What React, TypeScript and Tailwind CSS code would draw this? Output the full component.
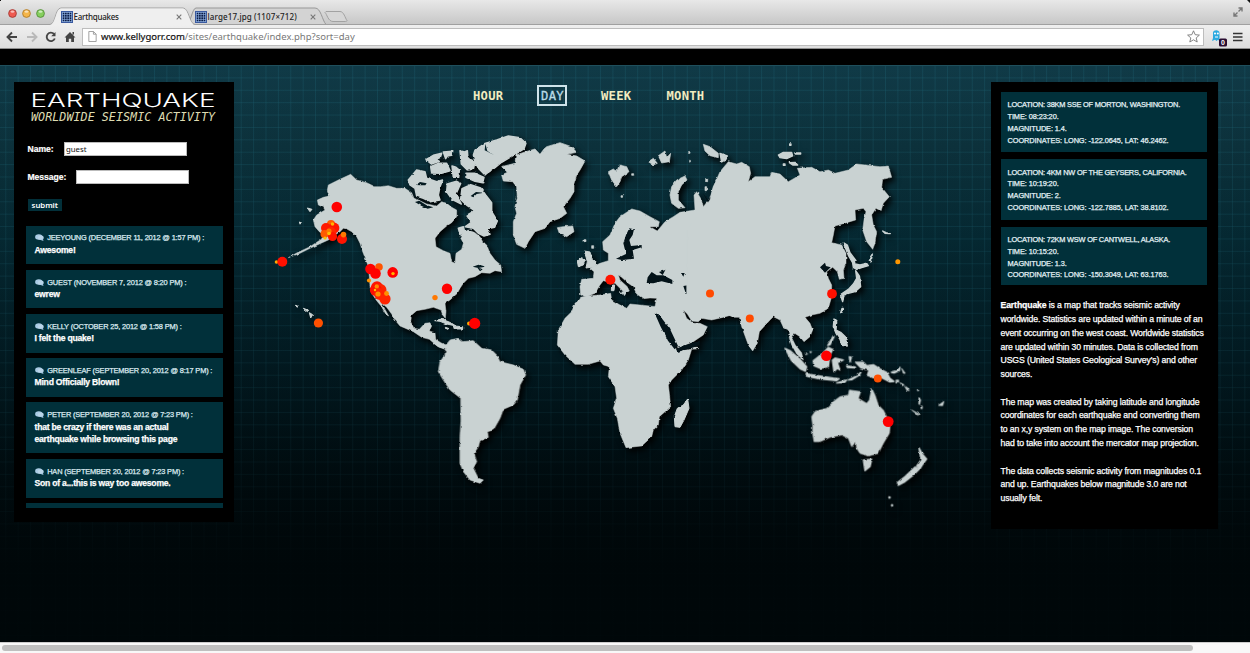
import React from "react";

const comments = [
  { who: "JEEYOUNG (DECEMBER 11, 2012 @ 1:57 PM) :", text: "Awesome!" },
  { who: "GUEST (NOVEMBER 7, 2012 @ 8:20 PM) :", text: "ewrew" },
  { who: "KELLY (OCTOBER 25, 2012 @ 1:58 PM) :", text: "I felt the quake!" },
  { who: "GREENLEAF (SEPTEMBER 20, 2012 @ 8:17 PM) :", text: "Mind Officially Blown!" },
  { who: "PETER (SEPTEMBER 20, 2012 @ 7:23 PM) :", text: "that be crazy if there was an actual earthquake while browsing this page" },
  { who: "HAN (SEPTEMBER 20, 2012 @ 7:23 PM) :", text: "Son of a...this is way too awesome." },
];

const reports = [
  ["38KM SSE OF MORTON, WASHINGTON.", "08:23:20.", "1.4.", "LONG: -122.0645, LAT: 46.2462."],
  ["4KM NW OF THE GEYSERS, CALIFORNIA.", "10:19:20.", "2.", "LONG: -122.7885, LAT: 38.8102."],
  ["72KM WSW OF CANTWELL, ALASKA.", "10:15:20.", "1.3.", "LONG: -150.3049, LAT: 63.1763."],
];

// x, y, radius, colour
const quakes: [number, number, number, string][] = [
  [336.8, 207, 5.3, "#ff0000"],
  [276.5, 262, 1.8, "#ffa800"], [282.3, 261.8, 5, "#ff1000"],
  [331, 224, 4, "#ff5a00"], [326, 228, 5, "#ff1800"], [334, 228, 5.4, "#ff1400"], [331, 232, 5, "#ff2800"],
  [324.5, 234, 4, "#ff5a00"], [332.5, 236.5, 4.6, "#ff1400"], [329, 231, 2.6, "#ff7a00"], [332.5, 224, 1.8, "#ffb400"],
  [329, 233.5, 1.8, "#ffc000"], [325, 238, 1.6, "#ffc000"],
  [342, 239, 5, "#ff1400"], [343.5, 234.6, 2.8, "#ff7800"],
  [370.5, 269, 5.3, "#ff0000"], [379, 267, 3.8, "#ff5400"], [375.5, 273.5, 5.3, "#ff0000"],
  [392.7, 272.4, 5.3, "#ff0000"], [393, 273.6, 1.7, "#ffb400"], [369, 280.5, 2.1, "#ff9000"],
  [377, 287, 5.8, "#ff1400"], [380.5, 290, 6, "#ff2400"], [375.8, 290, 6, "#ff1000"], [380, 294, 6, "#ff2000"],
  [385, 299, 5.6, "#ff2400"], [376.8, 286.4, 2.2, "#ff8a00"], [378, 294, 2.6, "#ff9000"], [386.5, 293.5, 2.4, "#ff9000"], [375, 290, 1.2, "#ffc000"],
  [447, 288.7, 5.2, "#ff0000"], [435, 297.6, 2.7, "#ff7800"],
  [318.4, 323, 4.6, "#ff5000"],
  [469, 323.4, 2, "#ffa800"], [474.7, 323.4, 5.6, "#ff0000"],
  [610.4, 279.8, 5, "#ff1400"], [710, 293.4, 4, "#ff4a00"], [749.8, 318.4, 4, "#ff4a00"],
  [832, 293.8, 4.9, "#ff1000"], [897.8, 261.8, 2.5, "#ff9600"],
  [826.4, 355.8, 5.3, "#ff0000"], [877.8, 378.5, 4, "#ff5000"], [888.2, 421.6, 5.4, "#ff0000"],
];

function WorldMap() {
  return (
    <svg width="710" height="400" viewBox="260 120 710 400" className="block">
      <defs>
        <filter id="coast" x="250" y="110" width="730" height="420" filterUnits="userSpaceOnUse" colorInterpolationFilters="sRGB">
          <feTurbulence type="fractalNoise" baseFrequency="0.22" numOctaves="2" seed="4" result="n" />
          <feDisplacementMap in="SourceGraphic" in2="n" scale="2.4" xChannelSelector="R" yChannelSelector="G" result="d" />
          <feDropShadow in="d" dx="3" dy="3.5" stdDeviation="3" floodColor="#000" floodOpacity="1" />
        </filter>
      </defs>
      <g filter="url(#coast)" fill="#c9d2d2" stroke="#c9d2d2" strokeLinejoin="round">
        {/* North America */}
        <g transform="translate(260 120) scale(.33333)" strokeWidth="1.500">
          <path d="M205 195L235 180L272 163L290 180L320 188L345 200L362 200L385 197L410 205L435 205L455 218L462 235L475 240L500 252L530 258L545 245L560 250L575 262L590 270L590 290L575 308L560 318L540 335L525 355L528 380L550 392L570 400L575 425L585 430L588 400L605 388L610 370L600 350L610 335L625 330L645 338L660 350L668 365L680 375L690 400L705 420L722 435L725 455L705 452L690 460L665 458L645 470L625 475L610 490L600 505L592 520L570 540L555 550L558 575L556 595L548 585L543 570L520 562L495 568L470 572L455 585L452 605L462 625L478 628L495 610L510 608L515 618L508 633L525 638L528 665L545 672L560 690L534 680L508 658L485 652L460 635L420 618L405 600L395 582L380 562L364 548L376 570L386 588L378 584L365 560L350 542L335 520L330 500L328 470L325 440L318 420L308 395L300 370L290 350L275 335L262 328L250 325L240 335L225 345L205 360L180 371L150 385L120 400L85 413L110 399L150 380L185 357L190 345L178 335L165 320L160 300L170 285L195 270L190 262L175 255L172 240L190 232L208 228L202 210Z" />
          <g strokeWidth="4.500">
            <path d="M445 180L470 150L495 155L500 175L530 185L548 180L540 200L535 225L540 240L510 245L490 235L470 228L465 205L450 195ZM498 119L520 106L545 100L541 112L528 118L538 124L514 132ZM550 96L578 94L575 106L562 108L557 116ZM512 140L535 130L560 130L570 152L545 160L515 159ZM600 92L614 96L622 92L624 115L645 125L640 148L622 150L604 132ZM576 138L588 142L598 150L596 172L580 172ZM562 192L590 184L602 190L596 204L588 222L604 252L576 238L560 215Z" />
            <path d="M606 206L624 198L632 194L662 204L677 225L695 248L695 275L712 303L704 322L682 326L690 343L672 348L655 340L640 325L616 320L634 307L620 286L644 272L622 257L602 238ZM595 325L610 320L614 335L600 343Z" />
            <path d="M618 160L645 160L672 172L668 188L645 184L618 172Z" />
          </g>
          <path d="M142 264L156 268L150 275ZM118 306L125 309L120 312ZM106 556L116 558L112 562ZM130 565L146 571L142 575ZM148 578L158 584L152 594ZM524 602L545 597L572 608L588 618L560 612L540 604ZM580 618L608 620L608 627L583 627ZM556 622L565 625L558 628Z" strokeWidth="3" />
          <g fill="#041a20" stroke="none">
            <path d="M638 440L655 434L675 440L655 444ZM650 440L668 448L660 454ZM468 195L480 186L500 190L496 196L482 196ZM465 246L478 242L500 256L520 262L503 266L485 258ZM632 228L648 216L672 218L650 222L640 232Z" />
          </g>
        </g>
        {/* Greenland and the northern islands */}
        <g transform="translate(420 75) scale(.33333)" strokeWidth="2">
          <path d="M165 225L195 205L230 195L265 183L300 188L318 205L312 222L290 235L265 250L245 262L225 278L205 292L195 300L175 280L165 260L160 240Z" strokeWidth="4" />
          <path d="M245 275L285 265L288 240L318 230L345 222L360 238L372 222L380 215L420 203L455 215L470 232L440 238L470 243L495 258L480 285L470 300L462 325L462 350L450 370L430 395L440 415L420 430L390 440L375 460L345 470L325 500L315 520L290 508L280 480L280 440L290 415L285 395L292 370L290 335L278 320L250 318L245 300L262 292Z" />
          <path d="M412 458L430 455L458 453L462 470L440 485L418 475ZM565 290L580 282L590 290L598 270L620 275L627 290L605 305L600 320L590 335L575 315ZM685 260L700 250L712 265L700 270ZM715 242L735 228L740 248L752 235L748 260L725 264ZM850 208L870 215L895 235L895 248L870 242L855 228Z" />
          <path d="M755 335L770 315L795 303L801 315L785 330L775 350L775 375L795 398L775 400L755 385L750 360Z" />
          <path d="M805 230h5v5h-5zM806 256h5v5h-5zM857 310h6v10h-6zM855 335h5v12h-5zM635 296h6v5h-6zM603 362h5v5h-5zM492 494h6v6h-6zM515 512h6v8h-6z" />
          <path d="M196 206L202 228L222 240L206 232L194 226Z" fill="#06222a" stroke="none" />
        </g>
        {/* Europe, Middle East and Africa */}
        <g transform="translate(540 190) scale(.33333)" strokeWidth="1.500">
          <path d="M188 155L210 135L225 100L240 80L275 57L300 63L330 80L358 95L355 110L330 110L352 123L375 95L400 80L420 67L465 60L462 15L470 5L485 30L490 50L510 25L520 -10L540 -45L700 0L640 360L598 380L575 375L545 383L515 390L485 385L475 395L455 393L442 372L430 360L440 385L460 400L480 400L502 410L490 435L460 455L415 475L405 460L390 430L370 400L350 372L345 350L350 325L330 324L310 326L290 312L280 290L265 280L245 262L235 255L240 270L262 290L268 303L255 310L240 295L225 280L205 276L190 272L180 285L165 310L140 320L122 315L120 290L125 268L160 265L162 245L150 235L180 220L205 212L205 190L190 180Z" />
          <path d="M122 322L140 318L180 315L212 310L215 330L240 345L260 355L270 342L300 345L350 350L350 375L370 410L390 440L405 470L412 482L455 478L445 510L425 540L395 570L385 585L388 610L392 650L358 680L355 705L340 720L335 740L305 768L258 773L240 730L232 685L220 655L230 625L225 590L205 560L208 530L190 525L180 513L145 523L105 523L75 495L52 465L55 420L75 385L95 365L105 340L120 328Z" />
          <path d="M443 627L447 655L432 690L420 712L405 710L403 680L412 655L430 645ZM133 183L150 186L155 205L170 217L165 230L138 234L142 215ZM112 214L125 203L136 210L130 225L115 230ZM215 285L224 285L222 302L214 302ZM238 306L258 306L254 316ZM455 472L475 472L475 476L455 477Z" strokeWidth="3" />
          <g fill="#031319" stroke="none">
            <path d="M268 115L282 118L278 135L268 150L273 168L305 165L305 172L278 180L282 206L245 210L228 206L258 192L250 160L258 135Z" />
            <path d="M320 279L323 262L335 246L350 256L370 256L397 270L397 282L365 274L340 280ZM357 246L376 240L368 255ZM430 288L448 285L460 305L438 312ZM423 249L434 249L430 260Z" />
            <path d="M344 370L360 378L390 417L414 468L404 478L384 452L362 410ZM408 476L440 464L480 452L478 466L455 474L412 486Z" />
            <path d="M488 8L505 40L500 85L513 88L505 55L517 15L505 30Z" />
          </g>
        </g>
        {/* Asia */}
        <g transform="translate(720 130) scale(.33333)" strokeWidth="1.500">
          <path d="M0 125L25 95L50 102L65 97L88 110L92 130L85 155L105 140L150 140L155 127L180 132L205 155L240 135L232 115L275 112L300 125L325 120L345 130L385 120L410 102L480 110L505 108L515 142L488 148L485 172L508 200L490 220L483 243L468 235L455 255L460 285L470 305L465 340L458 358L440 335L428 300L432 270L438 245L430 235L405 240L407 270L380 278L345 288L340 315L335 338L365 345L378 370L378 400L370 420L372 445L358 448L352 425L338 412L320 425L325 445L335 465L335 500L325 535L300 550L275 555L255 562L270 580L278 600L270 620L252 635L240 620L224 610L216 625L226 645L245 668L250 690L230 672L215 645L208 625L205 600L190 592L180 570L160 560L150 570L118 605L112 640L98 663L85 645L65 590L58 562L40 562L25 555L0 562L-100 500L-100 300L-30 210L-20 170Z" />
          <g strokeWidth="4">
            <path d="M175 75L190 67L215 67L218 78L200 86L180 83ZM224 69L242 69L242 72L226 72ZM208 98L225 97L233 105L218 105ZM0 70L22 78L18 88L5 96ZM190 102h5v4h-5zM209 42h4v4h-4z" />
            <path d="M370 338L382 345L390 368L408 392L400 402L386 378ZM398 400L420 405L440 400L445 407L425 413L410 418L400 412ZM407 422L418 438L422 470L405 485L385 490L370 496L364 492L385 478L400 462L410 445ZM362 497L372 500L368 515ZM488 303L498 308L508 311L495 310ZM452 380L457 372L455 385ZM448 395L452 388L452 397ZM366 535L370 535L362 548Z" />
            <path d="M342 567L350 575L348 600L362 607L376 620L382 648L366 646L360 628L348 610L340 590Z" />
          </g>
          <path d="M300 412L315 398L318 408L332 412L315 428Z" fill="#031319" stroke="none" />
        </g>
        {/* South America */}
        <g transform="translate(400 320) scale(.33333)" strokeWidth="2">
          <path d="M105 58L125 70L138 75L150 60L175 55L188 65L220 62L245 85L275 90L290 105L300 125L340 135L370 148L377 165L360 195L352 240L340 255L310 268L300 295L280 330L262 335L265 352L240 362L235 380L222 400L230 425L220 445L235 475L250 480L240 490L210 480L190 455L180 430L180 350L183 300L182 235L150 210L130 180L115 155L120 125L135 105L138 85L120 82L104 72Z" />
        </g>
        {/* Oceania */}
        <g transform="translate(720 300) scale(.33333)" strokeWidth="2">
          <path d="M275 350L285 335L320 325L340 305L360 290L385 285L388 270L422 275L415 295L440 310L448 300L455 265L465 285L475 315L490 330L500 350L510 380L508 400L490 430L475 460L445 468L420 460L410 445L408 425L395 440L385 415L365 405L330 412L300 425L282 425L278 400L278 375Z" />
          <g strokeWidth="4">
            <path d="M430 480L455 478L450 500L435 512ZM597 444L607 462L620 477L608 493L600 506L590 498L603 480ZM585 501L597 508L580 525L555 545L535 556L532 548L555 530Z" />
            <path d="M280 182L290 174L310 158L325 142L338 148L330 165L325 200L300 205L282 197ZM195 145L210 152L240 178L260 200L256 214L240 206L215 182ZM258 221L300 228L340 234L358 236L350 242L300 237L262 229ZM337 180L345 174L370 180L352 188L360 210L352 205L342 215ZM350 249L380 240L374 247ZM385 240L410 228L423 216L418 225L395 239Z" />
            <path d="M407 187L430 187L440 197L460 194L480 207L500 217L510 235L522 244L510 246L485 233L460 233L442 226L447 210L422 203ZM514 217L532 212L540 202L538 212L522 219ZM388 170L394 172L390 186ZM380 198L406 201L406 204L382 202ZM323 136L340 108L342 110L330 134Z" />
          </g>
          <path d="M545 205L556 220L550 220ZM528 240h8v6h-8zM540 248l12 6l-4 4zM554 258l10 6l4 8l-8-2zM592 268h4v4h-4zM597 292l5 8l-3 14l-3-2zM603 318h4v8h-4zM575 330L598 342L594 346ZM655 316L672 304L668 317ZM506 590h5v5h-5zM514 613h4v6h-4zM256 158l7 4l-6 2zM270 154l5 2l-4 3z" />
        </g>
      </g>
      {quakes.map(([x, y, r, c], i) => (
        <circle key={i} cx={x} cy={y} r={r} fill={c} />
      ))}
    </svg>
  );
}

function Favicon() {
  return (
    <svg width="12" height="12" viewBox="0 0 12 12" className="shrink-0">
      <rect x=".5" y=".5" width="11" height="11" fill="#8fb2e4" stroke="#3a5aa0" />
      {[1.7, 4, 6.3, 8.6].map((y) =>
        [1.7, 4, 6.3, 8.6].map((x) => <rect key={`${x}-${y}`} x={x} y={y} width="1.700" height="1.700" fill="#0b1c46" />)
      )}
    </svg>
  );
}

function Cross() {
  return (
    <svg width="6" height="6" viewBox="0 0 6 6" className="shrink-0">
      <path d="M.7 .7L5.300 5.300M5.300 .7L.7 5.300" stroke="#777" strokeWidth="1.100" />
    </svg>
  );
}

function Light({ tone, edge }: { tone: string; edge: string }) {
  return (
    <svg width="9" height="9" viewBox="0 0 9 9">
      <circle cx="4.500" cy="4.500" r="3.900" fill={tone} stroke={edge} strokeWidth=".8" />
      <ellipse cx="4.500" cy="2.600" rx="2" ry="1.200" fill="#fff" opacity=".6" />
    </svg>
  );
}

function Browser() {
  return (
    <header className="h-[49px] shrink-0 font-['Noto_Sans',sans-serif]">
      <div className="relative flex h-[25px] items-end bg-linear-to-b from-[#e8e8e8] to-[#c6c6c6]">
        <svg width="1250" height="25" viewBox="0 0 1250 25" className="absolute inset-0">
          <path d="M186 24.500C191 24 192 8 196 8H315C321 8 322 20 326 24.500Z" fill="#d3d3d3" stroke="#989898" />
          <path d="M326 11.500H340C344 11.500 345 18 347 20.500C347 21.500 346 21.500 344 21.500H333C328 21.500 327 14 325 12.500Z" fill="#d6d6d6" stroke="#a2a2a2" />
          <path d="M0 24.500H50C56 24 55 8 61 8H183C189 8 189 24 195 24.500H1250" fill="none" stroke="#a0a0a0" />
          <path d="M50 25C56 24 55.500 8.500 61 8.500H183C188.500 8.500 189 24 195 25Z" fill="#efefef" />
          <path d="M1238.500 8h3.500v3.500M1242 8l-3.500 3.500M1237.500 16h-3.500v-3.500M1234 16l3.500-3.500" fill="none" stroke="#777" strokeWidth="1.400" />
          <path d="M1247 0h3v3zM0 0h1v1H0z" fill="#111" />
        </svg>
        <div className="relative flex h-[17px] w-full items-center text-[8px] font-medium text-[#222]">
          <div className="-mt-[6px] flex gap-[5px] pl-[7.500px]">
            <Light tone="#ef5a50" edge="#9c332e" />
            <Light tone="#f5b548" edge="#a87524" />
            <Light tone="#86cf5e" edge="#4b8632" />
          </div>
          <div className="ml-[16px] flex w-[134px] items-center">
            <Favicon />
            <span className="w-[103px] pl-px tracking-[-0.250px]">Earthquakes</span>
            <Cross />
          </div>
          <Favicon />
          <span className="w-[103px] pl-px tracking-[0.120px]">large17.jpg (1107×712)</span>
          <Cross />
        </div>
      </div>
      <div className="flex h-[24px] items-center border-b border-[#8f8f8f] bg-linear-to-b from-[#efefef] to-[#dedede] pl-[6px]">
        <svg width="72" height="14" viewBox="0 0 72 14" fill="none" strokeWidth="1.900" className="shrink-0">
          <path d="M6 2.500L1.500 7L6 11.500M1.500 7H11" stroke="#444" />
          <path d="M26 2.500L30.500 7L26 11.500M30.500 7H21" stroke="#b9b9b9" />
          <path d="M48 4A4.200 4.200 0 1 0 48.800 8.500" stroke="#444" />
          <path d="M49.500 2V6.200H45.200Z" fill="#444" />
          <path d="M58.500 7.500L64 2L69.500 7.500H68V12H65.200V8.800H62.800V12H60V7.500ZM66.500 2h1.500v2.500h-1.500z" fill="#444" />
        </svg>
        <div className="ml-[4px] flex h-[18px] w-[1122px] items-center border border-[#bdbdbd] bg-white pl-[5px] text-[9.500px] text-[#777]">
          <svg width="9" height="11" viewBox="0 0 9 12" className="mr-[4px] shrink-0">
            <path d="M.5 .5H5.500L8.500 3.500V11.500H.5ZM5.500 .5V3.500H8.500" fill="#fff" stroke="#999" />
          </svg>
          <span className="pt-px tracking-[-0.040px] text-[#111] [-webkit-text-stroke:0.200px]">www.kellygorr.com</span>
          <span className="pt-px">/sites/earthquake/index.php?sort=day</span>
          <svg width="13" height="13" viewBox="0 0 13 13" className="mr-[3px] ml-auto shrink-0">
            <path d="M6.500 .8L8.200 4.700L12.400 5.100L9.200 7.900L10.200 12L6.500 9.800L2.800 12L3.800 7.900L.6 5.100L4.800 4.700Z" fill="#fff" stroke="#777" strokeWidth=".9" />
          </svg>
        </div>
        <svg width="16" height="18" viewBox="0 0 16 18" className="mt-[2px] ml-[7px] shrink-0">
          <path d="M2 3.500C2.500 .5 8.500 .5 8.500 4V12L7 10.800L5.500 12L4 10.800L1 12L2 9Z" fill="#2ba9e0" />
          <circle cx="4" cy="4.500" r="1" fill="#fff" /><circle cx="6.800" cy="4.500" r="1" fill="#fff" />
          <path d="M4 8h3" stroke="#fff" />
          <rect x="8" y="9.500" width="8" height="8" rx="1.500" fill="#2a0d31" />
          <text x="12" y="16" fill="#fff" fontSize="7" fontWeight="700" textAnchor="middle" fontFamily="Liberation Sans">0</text>
        </svg>
        <svg width="10" height="10" viewBox="0 0 10 10" className="ml-[6px] shrink-0">
          <path d="M0 1.500H9.500M0 5H9.500M0 8.500H9.500" stroke="#333" strokeWidth="1.700" />
        </svg>
      </div>
    </header>
  );
}

function Bubble() {
  return (
    <svg width="9" height="7" viewBox="0 0 9 7" className="mr-[3.700px] shrink-0">
      <ellipse cx="3.800" cy="3" rx="3.700" ry="2.700" fill="#a9cbe4" />
      <ellipse cx="5.800" cy="3.800" rx="2.900" ry="2.200" fill="#b9d4e8" />
      <path d="M7.500 4.500L8.600 6.900L5 5.800Z" fill="#a9cbe4" />
    </svg>
  );
}

function LeftPanel() {
  return (
    <aside className="h-[440px] w-[220px] shrink-0 overflow-hidden bg-black pl-[12px] text-white">
      <svg width="200" height="46" viewBox="26 82 200 46" className="block">
        <text x="30.500" y="106.500" fontSize="18" fontWeight="300" textLength="185" lengthAdjust="spacingAndGlyphs" fill="#fff" className="font-['Inter','DejaVu_Sans',sans-serif]">EARTHQUAKE</text>
        <text x="31" y="120.500" fontSize="11.700" fontStyle="italic" textLength="184" lengthAdjust="spacing" fill="#dedcb2" className="font-['DejaVu_Sans_Mono',monospace]">WORLDWIDE SEISMIC ACTIVITY</text>
      </svg>
      <form className="pl-[1.500px] text-[8.600px] leading-[14px] font-bold tracking-[-0.050px]">
        <div className="mt-[14px] flex h-[15px] items-center">
          <label className="w-[36.500px] [-webkit-text-stroke:0.200px]">Name:</label>
          <div className="h-[14px] w-[123px] border border-[#bbb] bg-white pl-px text-[7.800px] leading-[13px] font-normal tracking-normal text-[#111] font-['Noto_Sans',sans-serif]">guest</div>
        </div>
        <div className="mt-[13px] flex h-[15px] items-center">
          <label className="w-[48.500px] [-webkit-text-stroke:0.200px]">Message:</label>
          <div className="h-[14px] w-[113px] border border-[#bbb] bg-white" />
        </div>
        <button type="button" className="mt-[14px] block h-[12.500px] w-[34.500px] bg-[#02303a] text-center text-[7.800px] leading-[12px] font-semibold tracking-[-0.050px] font-['Noto_Sans',sans-serif]">submit</button>
      </form>
      <div className="mt-[14.500px] flex h-[282px] w-[196.500px] flex-col gap-[5.400px] overflow-hidden">
        {comments.map((c) => (
          <div key={c.who} className="shrink-0 bg-[#01303a] px-[8.500px] pt-[6.400px] pb-[8px]">
            <div className="flex h-[12px] items-center whitespace-nowrap text-[7.400px] tracking-[-0.150px] text-[#dbeaf0] [-webkit-text-stroke:0.250px]">
              <Bubble />
              {c.who}
            </div>
            <p className="text-[8.600px] leading-[12.400px] font-bold tracking-[-0.220px] [-webkit-text-stroke:0.250px]">{c.text}</p>
          </div>
        ))}
        <div className="h-[20px] shrink-0 bg-[#01303a]" />
      </div>
    </aside>
  );
}

function RightPanel() {
  return (
    <aside className="h-[447px] w-[227px] shrink-0 bg-black px-[10px] pt-[10.500px] text-white">
      <div className="flex flex-col gap-[7px]">
        {reports.map((r) => (
          <div key={r[0]} className="mr-[0.500px] h-[60.400px] bg-[#01303a] pt-[7.400px] pl-[7px] text-[7.400px] leading-[11.700px] tracking-[-0.100px] whitespace-nowrap text-[#e4f2f6] last:h-[58px] [-webkit-text-stroke:0.250px]">
            <div className="tracking-[-0.210px]">LOCATION: {r[0]}</div>
            <div>TIME: {r[1]}</div>
            <div>MAGNITUDE: {r[2]}</div>
            <div>COORDINATES: {r[3]}</div>
          </div>
        ))}
      </div>
      <div className="mt-[14.500px] flex flex-col gap-[13.800px] text-[8.700px] leading-[13.770px] tracking-[-0.130px] whitespace-nowrap [-webkit-text-stroke:0.250px]">
        <p>
          <b>Earthquake</b> is a map that tracks seismic activity<br />
          worldwide. Statistics are updated within a minute of an<br />
          event occurring on the west coast. Worldwide statistics<br />
          are updated within 30 minutes. Data is collected from<br />
          USGS (United States Geological Survey's) and other<br />
          sources.
        </p>
        <p>
          The map was created by taking latitude and longitude<br />
          coordinates for each earthquake and converting them<br />
          to an x,y system on the map image. The conversion<br />
          had to take into account the mercator map projection.
        </p>
        <p>
          The data collects seismic activity from magnitudes 0.1<br />
          and up. Earthquakes below magnitude 3.0 are not<br />
          usually felt.
        </p>
      </div>
    </aside>
  );
}

export default function App() {
  return (
    <div className="flex h-[653px] w-[1250px] flex-col overflow-hidden bg-black font-['Liberation_Sans',Arial,sans-serif]">
      <Browser />
      <div className="h-[16px] shrink-0 bg-black" />
      <div className="h-[577px] shrink-0 border-t border-[#1f4f5c] bg-[linear-gradient(180deg,rgba(0,8,11,0)_0%,rgba(0,8,11,0.2)_30%,rgba(0,8,11,0.5)_60%,rgba(0,7,9,0.97)_86%),linear-gradient(90deg,rgba(30,100,118,0.32)_1px,transparent_1px),linear-gradient(180deg,rgba(30,100,118,0.32)_1px,transparent_1px),linear-gradient(180deg,#103a47_0%,#0d3540_14%,#06303b_30%,#032630_50%,#01161c_70%,#00090c_88%,#000608_100%)] bg-[length:100%_100%,12.400px_12.400px,12.400px_12.400px,100%_100%] bg-[position:0_0,5.300px_0,0_-1px,0_0]">
        <main className="flex h-full pt-[15.500px] pl-[14px]">
          <LeftPanel />
          <section className="ml-[26px] w-[730.500px] shrink-0">
            <nav className="flex h-[28px] items-center pl-[213px] text-[12.200px] font-bold tracking-[0.250px] text-[#f1ecc0] font-['DejaVu_Sans_Mono',monospace]">
              <span className="w-[64px] pt-px">HOUR</span>
              <span className="mr-[34px] flex h-[21px] w-[30px] items-center justify-center border-2 border-[#cfe3ea] pt-px pl-px text-[#b9dbe6] font-normal [-webkit-text-stroke:0.300px]">DAY</span>
              <span className="w-[65.500px] pt-px">WEEK</span>
              <span className="pt-px">MONTH</span>
            </nav>
            <div className="pt-[10.500px]">
              <WorldMap />
            </div>
          </section>
          <RightPanel />
        </main>
      </div>
      <div className="flex h-[11px] shrink-0 items-center border-t border-[#ccc] bg-[#f8f8f8] pl-[2px]">
        <div className="h-[6px] w-[1191px] rounded-full bg-[#bfbfbf]" />
      </div>
    </div>
  );
}
